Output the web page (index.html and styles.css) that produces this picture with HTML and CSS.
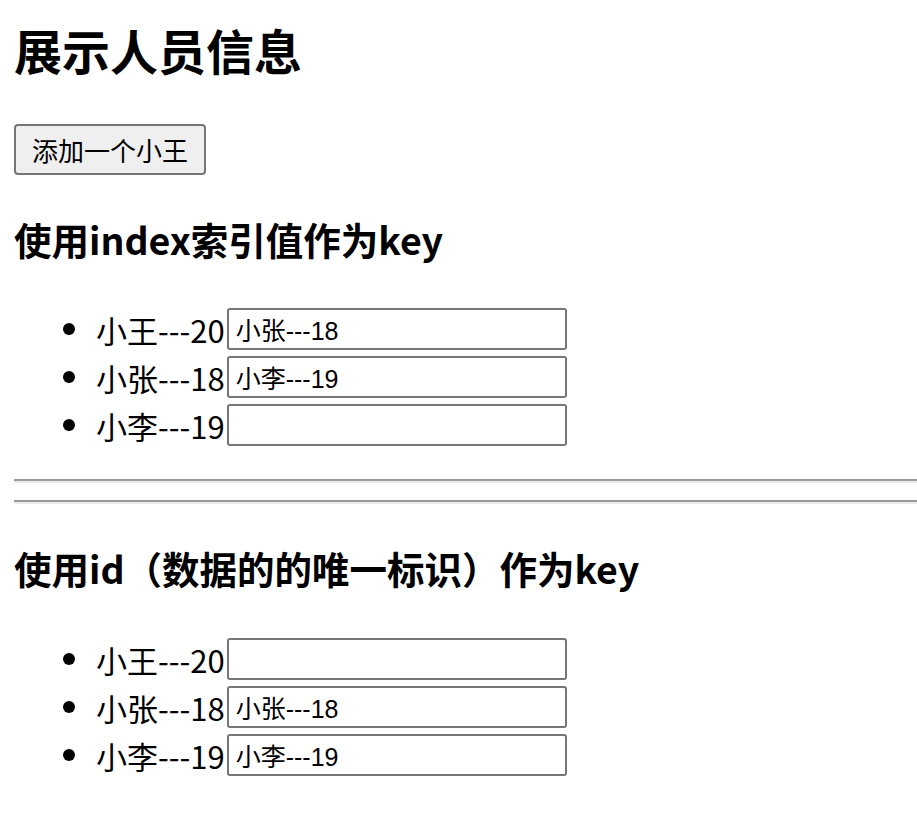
FILE: index.html
```html
<!DOCTYPE html>
<html lang="zh-CN">
<head>
<meta charset="utf-8">
<title>展示人员信息</title>
<link rel="stylesheet" href="styles.css">
</head>
<body>
<h1 class="title">展示人员信息</h1>
<div class="actions"><button class="btn">添加一个小王</button></div>
<h2 class="subtitle">使用index索引值作为key</h2>
<ul class="list">
  <li class="item"><span class="label">小王---20</span><input class="field" type="text" value="小张---18"></li>
  <li class="item"><span class="label">小张---18</span><input class="field" type="text" value="小李---19"></li>
  <li class="item"><span class="label">小李---19</span><input class="field" type="text" value=""></li>
</ul>
<hr class="rule rule-first">
<hr class="rule rule-second">
<h2 class="subtitle subtitle-second">使用id（数据的的唯一标识）作为key</h2>
<ul class="list list-second">
  <li class="item"><span class="label">小王---20</span><input class="field" type="text" value=""></li>
  <li class="item"><span class="label">小张---18</span><input class="field" type="text" value="小张---18"></li>
  <li class="item"><span class="label">小李---19</span><input class="field" type="text" value="小李---19"></li>
</ul>
</body>
</html>
```

FILE: styles.css
```css
html, body {
  background: #fff;
}
body {
  margin: 0 0 0 14px;
  color: #000;
  font-family: "Noto Sans CJK SC", "Noto Sans", sans-serif;
}
.title {
  margin: 19px 0 0;
  font-size: 48px;
  line-height: 60px;
  font-weight: 700;
}
.actions {
  margin-top: 45px;
  height: 51px;
}
.btn {
  height: 51px;
  padding: 0 16px;
  margin: 0;
  background: #efefef;
  border: 2px solid #767676;
  border-radius: 4px;
  font-family: "Noto Sans CJK SC", sans-serif;
  font-size: 26px;
  color: #000;
  line-height: 1;
}
.subtitle {
  margin: 40px 0 0;
  font-size: 37.5px;
  line-height: 48px;
  font-weight: 700;
}
.list {
  list-style: none;
  margin: 42px 0 0;
  padding: 0;
}
.list-second {
  margin-top: 43px;
}
.item {
  display: flex;
  align-items: center;
  height: 48px;
  padding-left: 49px;
  font-size: 31px;
}
.item::before {
  content: "";
  width: 12px;
  height: 12px;
  border-radius: 50%;
  background: #000;
  margin-right: 21px;
  flex: none;
}
.label {
  white-space: nowrap;
}
.field {
  box-sizing: border-box;
  width: 340px;
  height: 42px;
  margin: 0 0 0 2px;
  padding: 0 7px;
  border: 2px solid #767676;
  border-radius: 3px;
  background: #fff;
  font-family: "Liberation Sans", "Noto Sans CJK SC", sans-serif;
  font-size: 25px;
  color: #000;
}
.rule {
  height: 0;
  margin: 0;
  border: none;
  border-top: 2px solid #9a9a9a;
  border-bottom: 2px solid #eaeaea;
}
.rule-first {
  margin-top: 30px;
}
.rule-second {
  margin-top: 17px;
}
```
